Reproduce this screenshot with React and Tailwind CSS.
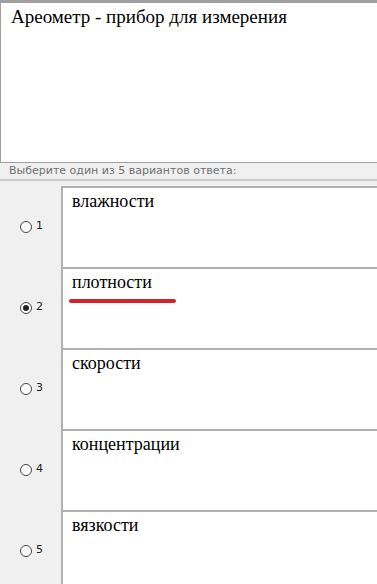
import React from 'react';

const options = ['влажности', 'плотности', 'скорости', 'концентрации', 'вязкости'];

function Radio({ checked }) {
  return (
    <span className="w-[12px] h-[12px] rounded-full border border-[#444] bg-white flex items-center justify-center">
      {checked && <span className="w-[6px] h-[6px] rounded-full bg-[#222]" />}
    </span>
  );
}

export default function App() {
  return (
    <div className="w-[377px] h-[584px] overflow-hidden bg-white flex flex-col">
      {/* Question */}
      <div className="h-[163px] shrink-0 border-t-[3px] border-l border-b border-[#a0a0a0] bg-white pl-[10px] pt-[2px]">
        <p className="text-[19px] leading-[24px] text-black" style={{ fontFamily: '"Liberation Serif", serif' }}>
          Ареометр - прибор для измерения
        </p>
      </div>

      {/* Hint strip */}
      <div className="h-[18px] shrink-0 bg-[#f0f0f0] border-b-2 border-[#c8c8c8] pl-[9px] flex items-center">
        <span className="text-[11px] text-[#707070]" style={{ fontFamily: '"DejaVu Sans", sans-serif' }}>
          Выберите один из 5 вариантов ответа:
        </span>
      </div>

      {/* Answers */}
      <div className="flex-1 bg-[#f0f0f0] pt-[5px] flex flex-col">
        {options.map((text, i) => (
          <div key={i} className="h-[81px] shrink-0 flex">
            <div className="w-[61px] shrink-0 flex items-center pl-[20px] gap-[4px]">
              <Radio checked={i === 1} />
              <span className="text-[11px] text-[#222]" style={{ fontFamily: '"DejaVu Sans", sans-serif' }}>{i + 1}</span>
            </div>
            <div className="flex-1 bg-white border-l-2 border-t-2 border-[#b0b0b0] pl-[9px] pt-[2px]">
              <p className="text-[18px] leading-[22px] text-black" style={{ fontFamily: '"Liberation Serif", serif' }}>{text}</p>
              {i === 1 && <div className="mt-[6px] -ml-[3px] w-[107px] h-[4px] rounded-full bg-[#d3222a]" />}
            </div>
          </div>
        ))}
      </div>
    </div>
  );
}
